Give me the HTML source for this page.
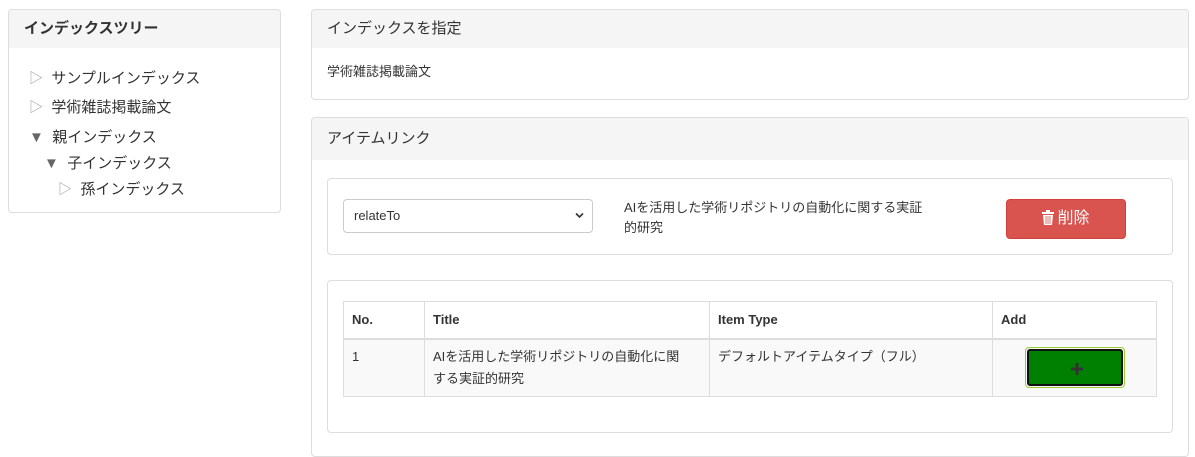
<!DOCTYPE html>
<html><head><meta charset="utf-8"><style>
body{margin:0;width:1195px;height:441px;overflow:hidden;background:#fff;font-family:"Liberation Sans","Noto Sans CJK JP",sans-serif;font-size:14px;color:#333}
.p{position:absolute;border:1px solid #ddd;border-radius:4px;background:#fff;box-sizing:border-box}
.h{background:#f5f5f5;height:38px;line-height:38px;padding-left:15px;font-size:15px;border-radius:4px 4px 0 0}
.t{position:absolute;font-size:15px;white-space:nowrap}
.tri{color:#999;font-size:14px}
.dn{color:#666;font-size:15px}
table{position:absolute;left:343px;top:301px;width:814px;border-collapse:collapse}
td,th{border:1px solid #ddd;text-align:left;vertical-align:top;padding:6px 8px;font-size:13px;line-height:22px}
th{font-weight:bold;padding:8px;height:20px;line-height:20px;border-bottom:2px solid #ddd}
</style></head><body>
<div class="p" style="left:8px;top:9px;width:273px;height:204px"><div class="h" style="font-weight:bold">インデックスツリー</div></div>
<div class="t" style="left:29px;top:67px"><span class="tri">▷</span>&nbsp; サンプルインデックス</div>
<div class="t" style="left:29px;top:96px"><span class="tri">▷</span>&nbsp; 学術雑誌掲載論文</div>
<div class="t" style="left:29px;top:126px"><span class="dn">▼</span>&nbsp; 親インデックス</div>
<div class="t" style="left:44px;top:152px"><span class="dn">▼</span>&nbsp; 子インデックス</div>
<div class="t" style="left:58px;top:178px"><span class="tri">▷</span>&nbsp; 孫インデックス</div>

<div class="p" style="left:311px;top:9px;width:878px;height:91px"><div class="h">インデックスを指定</div>
<div style="padding:13px 0 0 15px;font-size:13px">学術雑誌掲載論文</div></div>

<div class="p" style="left:311px;top:117px;width:878px;height:340px"><div class="h" style="height:42px;line-height:42px">アイテムリンク</div></div>
<div class="p" style="left:327px;top:178px;width:846px;height:77px"></div>
<div style="position:absolute;left:343px;top:199px;width:250px;height:34px;border:1px solid #ccc;border-radius:4px;box-sizing:border-box;line-height:32px;padding-left:10px;font-size:13px">relateTo<svg style="position:absolute;right:8px;top:12px" width="9" height="7" viewBox="0 0 9 7"><path d="M1 1.5l3.5 3.5 3.5-3.5" fill="none" stroke="#333" stroke-width="1.6"/></svg></div>
<div style="position:absolute;left:624px;top:198px;font-size:13px;line-height:20px;width:330px">AIを活用した学術リポジトリの自動化に関する実証<br>的研究</div>
<div style="position:absolute;left:1006px;top:199px;width:120px;height:40px;background:#d9534f;border:1px solid #d43f3a;border-radius:4px;box-sizing:border-box;color:#fff;text-align:center;line-height:38px;font-size:16px"><svg width="12" height="15" viewBox="0 0 12 15" style="vertical-align:-2px;margin-right:3px"><path d="M0 2h12v2H0z M4 0h4v2H4z M1 5h10l-1 10H2z" fill="#fff"/><path d="M4 6v8M6 6v8M8 6v8" stroke="#d9534f" stroke-width="0.8"/></svg>削除</div>
<div class="p" style="left:327px;top:280px;width:846px;height:153px"></div>
<table><tr><th style="width:64px">No.</th><th style="width:268px">Title</th><th style="width:266px">Item Type</th><th>Add</th></tr>
<tr style="background:#f9f9f9"><td>1</td><td>AIを活用した学術リポジトリの自動化に関<br>する実証的研究</td><td>デフォルトアイテムタイプ（フル）</td><td></td></tr></table>
<div style="position:absolute;left:1025px;top:347px;width:100px;height:41px;border:1px solid #9c3;border-radius:4px;box-sizing:border-box;padding:1px"><div style="background:#008000;border:2px solid #111;border-radius:3px;height:100%;box-sizing:border-box;position:relative"><svg style="position:absolute;left:42px;top:12px" width="12" height="12" viewBox="0 0 12 12"><path d="M4.5 0h3v4.5H12v3H7.5V12h-3V7.5H0v-3h4.5z" fill="#333"/></svg></div></div>
</body></html>
